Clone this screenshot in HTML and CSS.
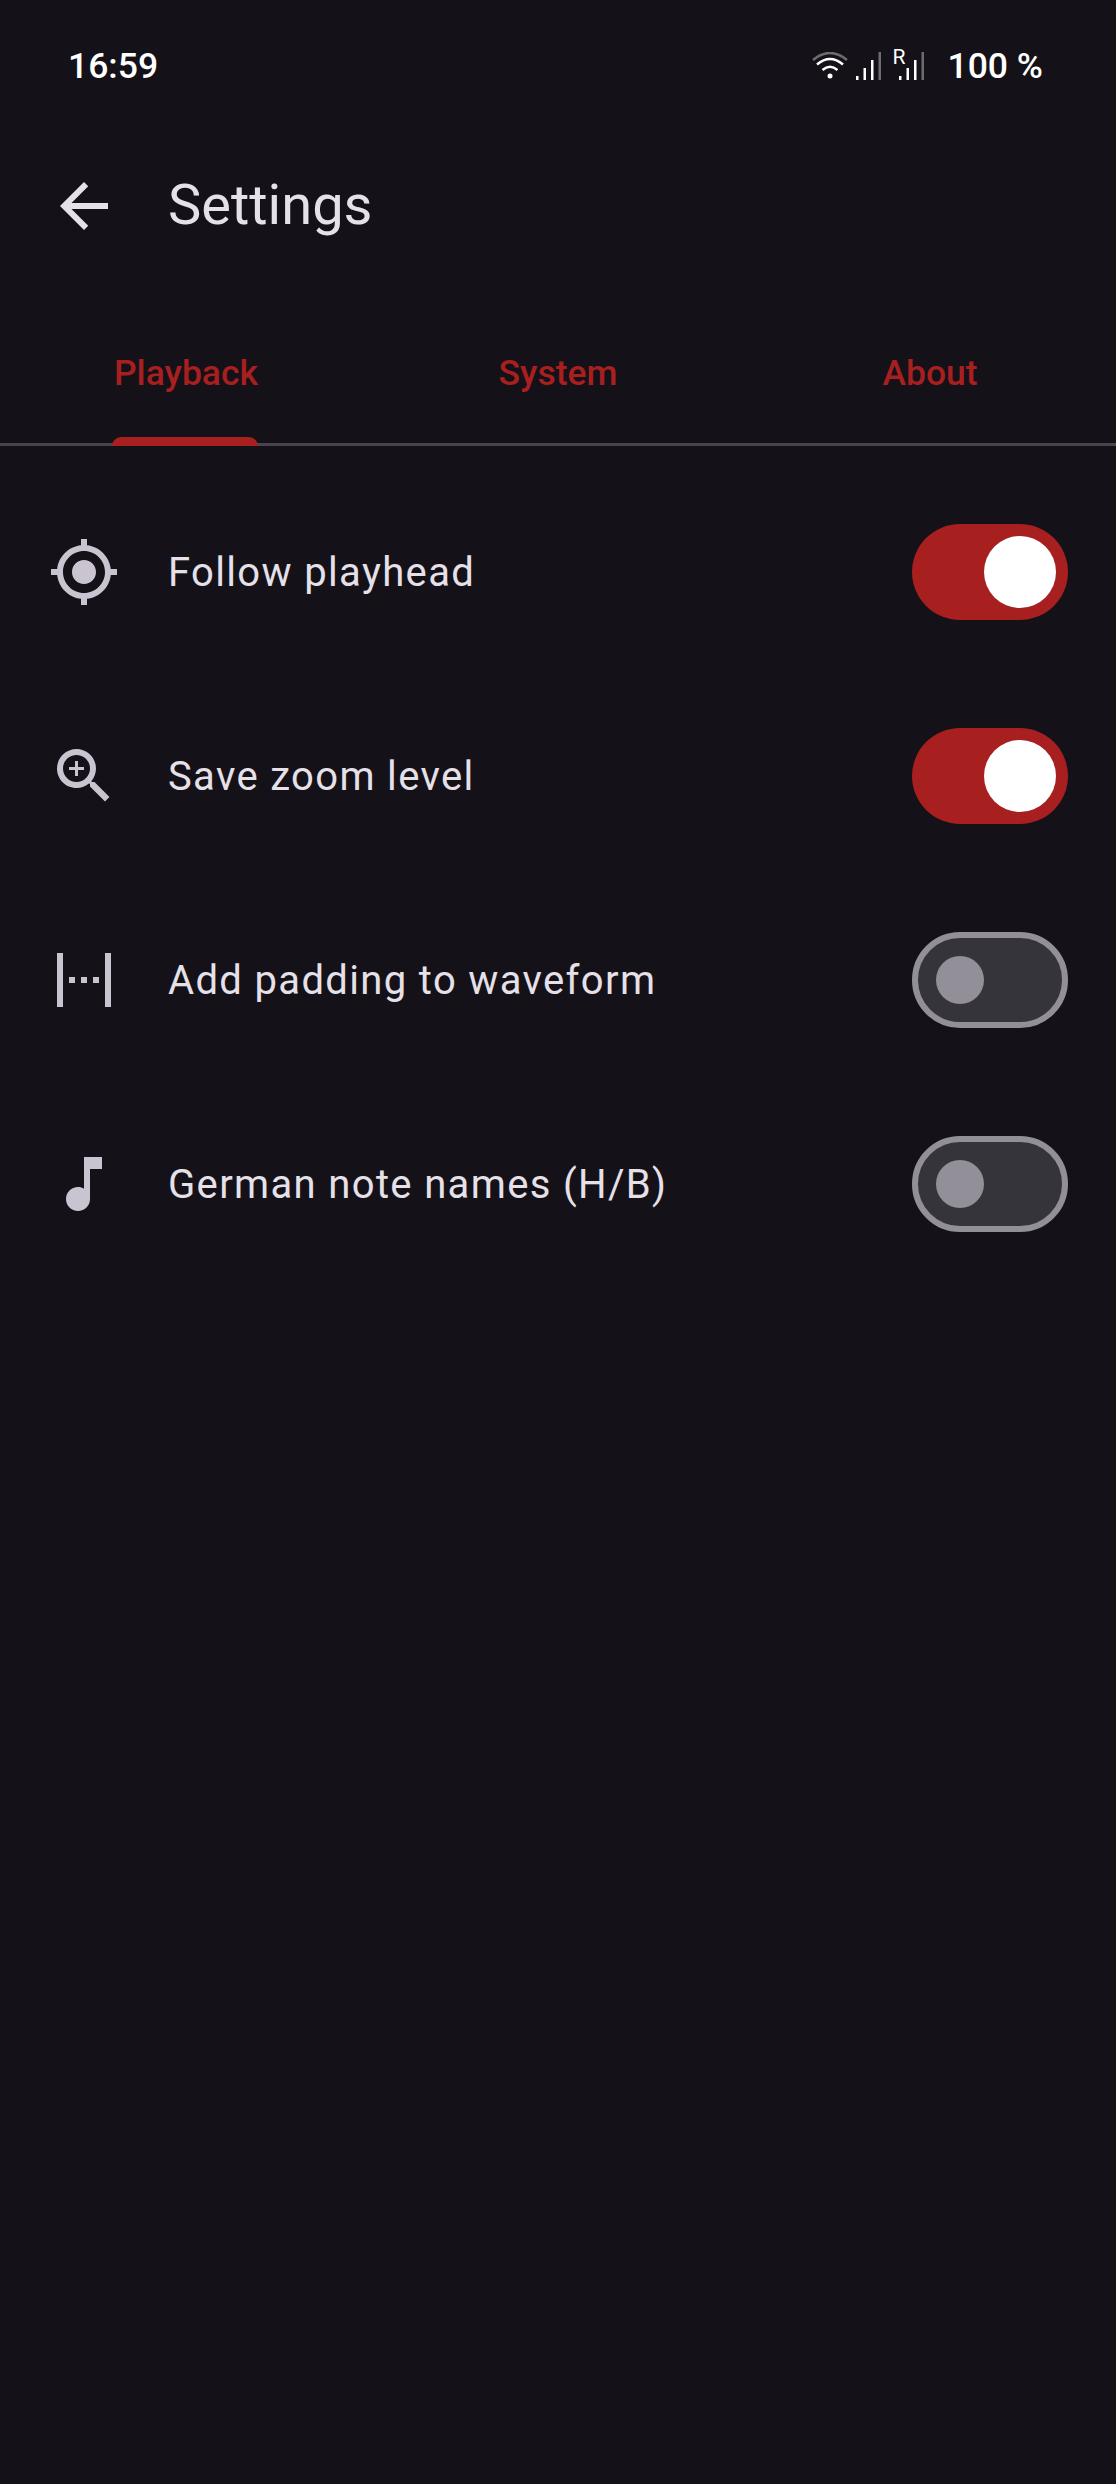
FILE: index.html
```html
<!DOCTYPE html>
<html lang="en">
<head>
    <meta charset="UTF-8">
    <title>Settings</title>
    <link rel="stylesheet" href="styles.css">
</head>
<body>

    <!-- status bar -->
    <div class="status-bar">
        <span class="clock">16:59</span>
        <div class="status-icons">
            <svg class="wifi" width="36" height="28" viewBox="0 0 36 28">
                <path class="dim" d="M1 8Q18 -6 35 8"/>
                <path d="M5 12.5Q18 1.5 31 12.5"/>
                <path d="M10.5 18Q18 11.5 25.500 18"/>
                <circle cx="18" cy="24" r="2.500"/>
            </svg>
            <svg class="signal" width="25" height="28" viewBox="0 0 25 28">
                <rect x="0" y="24" width="2.500" height="4"/>
                <rect x="7.500" y="16" width="2.500" height="12"/>
                <rect x="15" y="8" width="2.500" height="20"/>
                <rect class="dim" x="22.500" y="0" width="2.500" height="28"/>
            </svg>
            <div class="roaming">
                <span class="roaming-r">R</span>
                <svg class="signal" width="25" height="28" viewBox="0 0 25 28">
                    <rect x="0" y="24" width="2.500" height="4"/>
                    <rect x="7.500" y="16" width="2.500" height="12"/>
                    <rect x="15" y="8" width="2.500" height="20"/>
                    <rect class="dim" x="22.500" y="0" width="2.500" height="28"/>
                </svg>
            </div>
            <span class="battery">100 %</span>
        </div>
    </div>

    <!-- top bar -->
    <div class="top-bar">
        <svg class="icon back" viewBox="0 0 24 24"><path d="M20 11H7.830l5.590-5.590L12 4l-8 8 8 8 1.410-1.410L7.830 13H20v-2z"/></svg>
        <h1>Settings</h1>
    </div>

    <!-- tabs -->
    <div class="tabs">
        <div class="tab active"><span>Playback</span></div>
        <div class="tab"><span>System</span></div>
        <div class="tab"><span>About</span></div>
    </div>

    <!-- settings list -->
    <div class="list">
        <div class="row">
            <svg class="icon" viewBox="0 0 24 24"><path d="M12 8c-2.210 0-4 1.790-4 4s1.790 4 4 4 4-1.790 4-4-1.790-4-4-4zm8.940 3c-.46-4.170-3.770-7.480-7.940-7.940V1h-2v2.060C6.830 3.520 3.520 6.830 3.060 11H1v2h2.060c.46 4.170 3.770 7.480 7.940 7.940V23h2v-2.060c4.170-.46 7.480-3.770 7.940-7.940H23v-2h-2.060zM12 19c-3.870 0-7-3.130-7-7s3.130-7 7-7 7 3.130 7 7-3.130 7-7 7z"/></svg>
            <span class="label">Follow playhead</span>
            <div class="switch on"><div class="thumb"></div></div>
        </div>
        <div class="row">
            <svg class="icon" viewBox="0 0 24 24"><path d="M15.500 14h-.79l-.28-.27C15.410 12.590 16 11.110 16 9.500 16 5.910 13.090 3 9.500 3S3 5.910 3 9.500 5.910 16 9.500 16c1.610 0 3.090-.59 4.230-1.570l.27.280v.79l5 4.990L20.490 19l-4.990-5zm-6 0C7.010 14 5 11.990 5 9.500S7.010 5 9.500 5 14 7.010 14 9.500 11.990 14 9.500 14z"/><path d="M12 10h-2v2H9v-2H7V9h2V7h1v2h2v1z"/></svg>
            <span class="label">Save zoom level</span>
            <div class="switch on"><div class="thumb"></div></div>
        </div>
        <div class="row">
            <svg class="icon" viewBox="0 0 24 24"><path d="M3 3h2v18H3zM19 3h2v18h-2zM7 11h2v2H7zM11 11h2v2h-2zM15 11h2v2h-2z"/></svg>
            <span class="label">Add padding to waveform</span>
            <div class="switch"><div class="thumb"></div></div>
        </div>
        <div class="row">
            <svg class="icon" viewBox="0 0 24 24"><path d="M12 3v10.550c-.59-.34-1.270-.55-2-.55-2.210 0-4 1.790-4 4s1.790 4 4 4 4-1.790 4-4V7h4V3h-6z"/></svg>
            <span class="label">German note names (H/B)</span>
            <div class="switch"><div class="thumb"></div></div>
        </div>
    </div>

</body>
</html>
```

FILE: styles.css
```css
body {
    margin: 0;
    height: 2484px;
    background: #141218;
    color: #e6e0e9;
    font-family: Roboto, sans-serif;
    overflow: hidden;
}

/* status bar */
.status-bar {
    height: 130px;
    display: flex;
    justify-content: space-between;
    align-items: center;
    padding: 2px 73px 0 68px;
    box-sizing: border-box;
    color: #fff;
    font-size: 35.500px;
    font-weight: 500;
}
.status-icons {
    display: flex;
    align-items: center;
}
.wifi {
    margin-right: 8px;
}
.wifi path {
    fill: none;
    stroke: #fff;
    stroke-width: 2.500;
}
.wifi path.dim {
    stroke: #6e6c72;
}
.wifi circle {
    fill: #fff;
}
.signal rect {
    fill: #fff;
}
.signal rect.dim {
    fill: #6e6c72;
}
.roaming {
    position: relative;
    margin-left: 18px;
    display: flex;
}
.roaming-r {
    position: absolute;
    left: -6px;
    top: -7px;
    font-size: 21px;
    font-weight: 400;
    line-height: 24px;
}
.battery {
    margin-left: 24px;
}

/* top bar */
.top-bar {
    height: 152px;
    display: flex;
    align-items: center;
    padding-left: 48px;
}
.top-bar h1 {
    margin: -3px 0 0 48px;
    font-size: 56px;
    font-weight: 400;
}
.icon {
    width: 72px;
    height: 72px;
    flex: none;
    fill: #cac4d0;
}
.icon.back {
    fill: #e6e0e9;
}

/* tabs */
.tabs {
    height: 164px;
    box-sizing: border-box;
    display: grid;
    grid-template-columns: repeat(3, 1fr);
    border-bottom: 3px solid #49454f;
}
.tab {
    display: flex;
    justify-content: center;
}
.tab span {
    position: relative;
    height: 164px;
    box-sizing: border-box;
    padding-top: 69px;
    font-size: 35.500px;
    line-height: 44px;
    font-weight: 500;
    color: #a81f20;
}
.tab.active span::after {
    content: "";
    position: absolute;
    left: -2px;
    right: 0;
    bottom: 0;
    height: 9px;
    background: #a81f20;
    border-radius: 9px 9px 0 0;
}

/* rows */
.list {
    padding-top: 24px;
}
.row {
    height: 204px;
    display: flex;
    align-items: center;
    padding: 0 48px;
}
.label {
    flex: 1;
    margin-left: 48px;
    font-size: 40px;
    letter-spacing: 1.350px;
}
.switch {
    width: 156px;
    height: 96px;
    box-sizing: border-box;
    border-radius: 48px;
    border: 6px solid #938f99;
    background: #36343b;
    display: flex;
    align-items: center;
    padding-left: 18px;
}
.thumb {
    width: 48px;
    height: 48px;
    border-radius: 50%;
    background: #938f99;
}
.switch.on {
    background: #a81f20;
    border: none;
    justify-content: flex-end;
    padding: 0 12px 0 0;
}
.switch.on .thumb {
    width: 72px;
    height: 72px;
    background: #fff;
}
```
